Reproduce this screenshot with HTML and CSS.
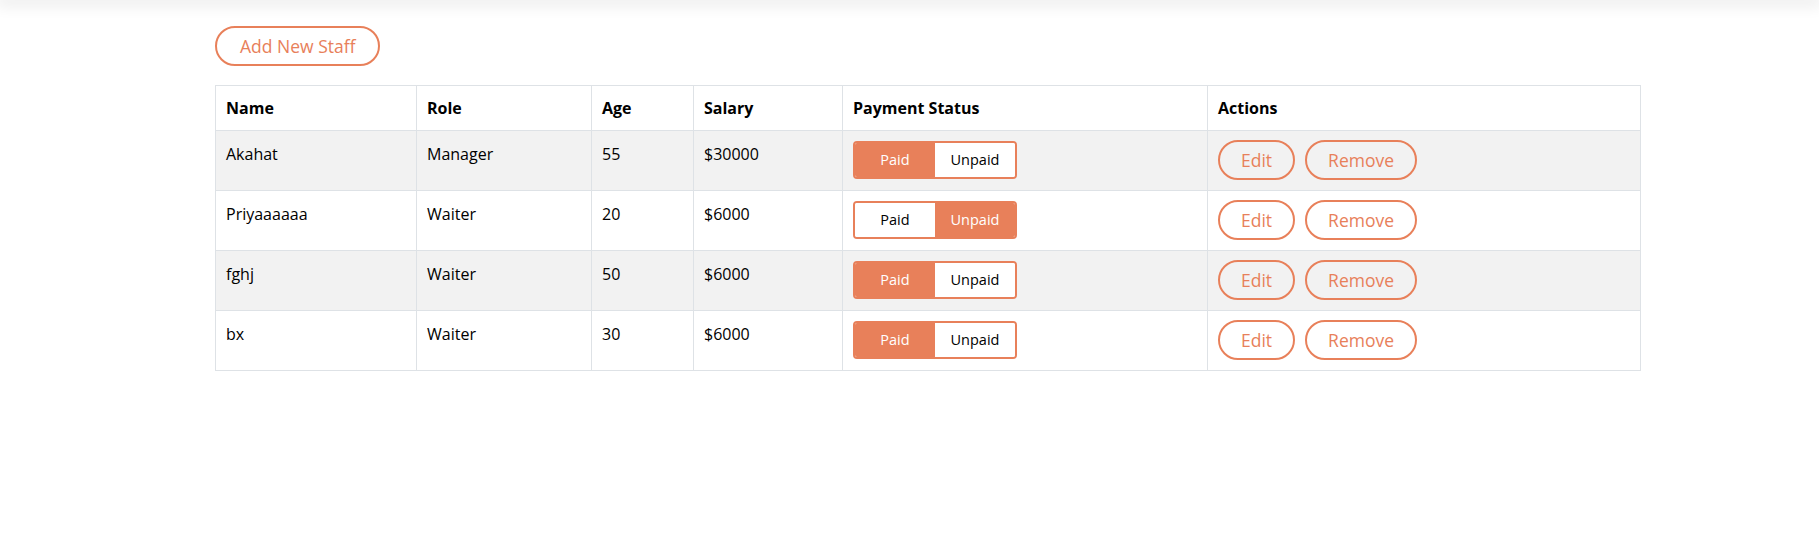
FILE: index.html
```html
<!DOCTYPE html>
<html lang="en">
<head>
<meta charset="utf-8">
<title>Staff</title>
<link rel="stylesheet" href="styles.css">
</head>
<body>
<header class="topbar"></header>
<main class="page">
  <button class="btn-outline add-btn">Add New Staff</button>
  <table class="staff-table">
    <colgroup>
      <col class="c-name"><col class="c-role"><col class="c-age"><col class="c-salary"><col class="c-pay"><col class="c-actions">
    </colgroup>
    <thead>
      <tr><th>Name</th><th>Role</th><th>Age</th><th>Salary</th><th>Payment Status</th><th>Actions</th></tr>
    </thead>
    <tbody>
      <tr class="odd">
        <td>Akahat</td><td>Manager</td><td>55</td><td>$30000</td>
        <td><div class="toggle"><span class="opt active">Paid</span><span class="opt">Unpaid</span></div></td>
        <td><div class="actions"><button class="btn-outline">Edit</button><button class="btn-outline">Remove</button></div></td>
      </tr>
      <tr>
        <td>Priyaaaaaa</td><td>Waiter</td><td>20</td><td>$6000</td>
        <td><div class="toggle"><span class="opt">Paid</span><span class="opt active">Unpaid</span></div></td>
        <td><div class="actions"><button class="btn-outline">Edit</button><button class="btn-outline">Remove</button></div></td>
      </tr>
      <tr class="odd">
        <td>fghj</td><td>Waiter</td><td>50</td><td>$6000</td>
        <td><div class="toggle"><span class="opt active">Paid</span><span class="opt">Unpaid</span></div></td>
        <td><div class="actions"><button class="btn-outline">Edit</button><button class="btn-outline">Remove</button></div></td>
      </tr>
      <tr>
        <td>bx</td><td>Waiter</td><td>30</td><td>$6000</td>
        <td><div class="toggle"><span class="opt active">Paid</span><span class="opt">Unpaid</span></div></td>
        <td><div class="actions"><button class="btn-outline">Edit</button><button class="btn-outline">Remove</button></div></td>
      </tr>
    </tbody>
  </table>
</main>
</body>
</html>
```
FILE: styles.css
```css
* { box-sizing: border-box; }
html, body {
  margin: 0;
  background: #ffffff;
  font-family: "Open Sans", "Noto Sans", "Liberation Sans", sans-serif;
  color: #000;
}
.topbar {
  height: 0;
  box-shadow: 0 0 16px 4px rgba(0, 0, 0, 0.12);
}
.page {
  padding: 26px 179px 0 215px;
}
.btn-outline {
  font-family: inherit;
  font-size: 17.5px;
  font-weight: 500;
  line-height: 24px;
  color: #e8805a;
  background: transparent;
  border: 2px solid #e8805a;
  border-radius: 999px;
  padding: 7px 21px;
  cursor: pointer;
}
.add-btn {
  display: block;
  height: 40px;
  padding: 0 23px;
  margin-bottom: 19px;
}
.staff-table {
  width: 1425px;
  table-layout: fixed;
  border-collapse: collapse;
  font-size: 16px;
  line-height: 24px;
}
.c-name { width: 201px; }
.c-role { width: 175px; }
.c-age { width: 102px; }
.c-salary { width: 149px; }
.c-pay { width: 365px; }
.c-actions { width: 433px; }
.staff-table th,
.staff-table td {
  border: 1px solid #dee2e6;
  padding: 10px;
  text-align: left;
  vertical-align: top;
}
.staff-table th {
  font-weight: 700;
  padding: 10px 10px 10px;
}
.staff-table td {
  padding: 9px 10px 10px;
}
.staff-table tbody tr td:nth-child(-n+4) {
  padding-top: 11px;
}
.staff-table tr.odd td { background: #f2f2f2; }
.toggle {
  display: inline-flex;
  border: 2px solid #e8805a;
  border-radius: 4px;
  overflow: hidden;
  background: #fff;
  margin-top: 1px;
}
.opt {
  width: 80px;
  height: 34px;
  display: flex;
  align-items: center;
  justify-content: center;
  font-size: 14.5px;
  color: #000;
  background: #fff;
}
.opt.active {
  background: #e8805a;
  color: #fff;
}
.actions {
  display: flex;
  gap: 10px;
}
.actions .btn-outline {
  height: 40px;
  padding: 0 21px;
}
```
